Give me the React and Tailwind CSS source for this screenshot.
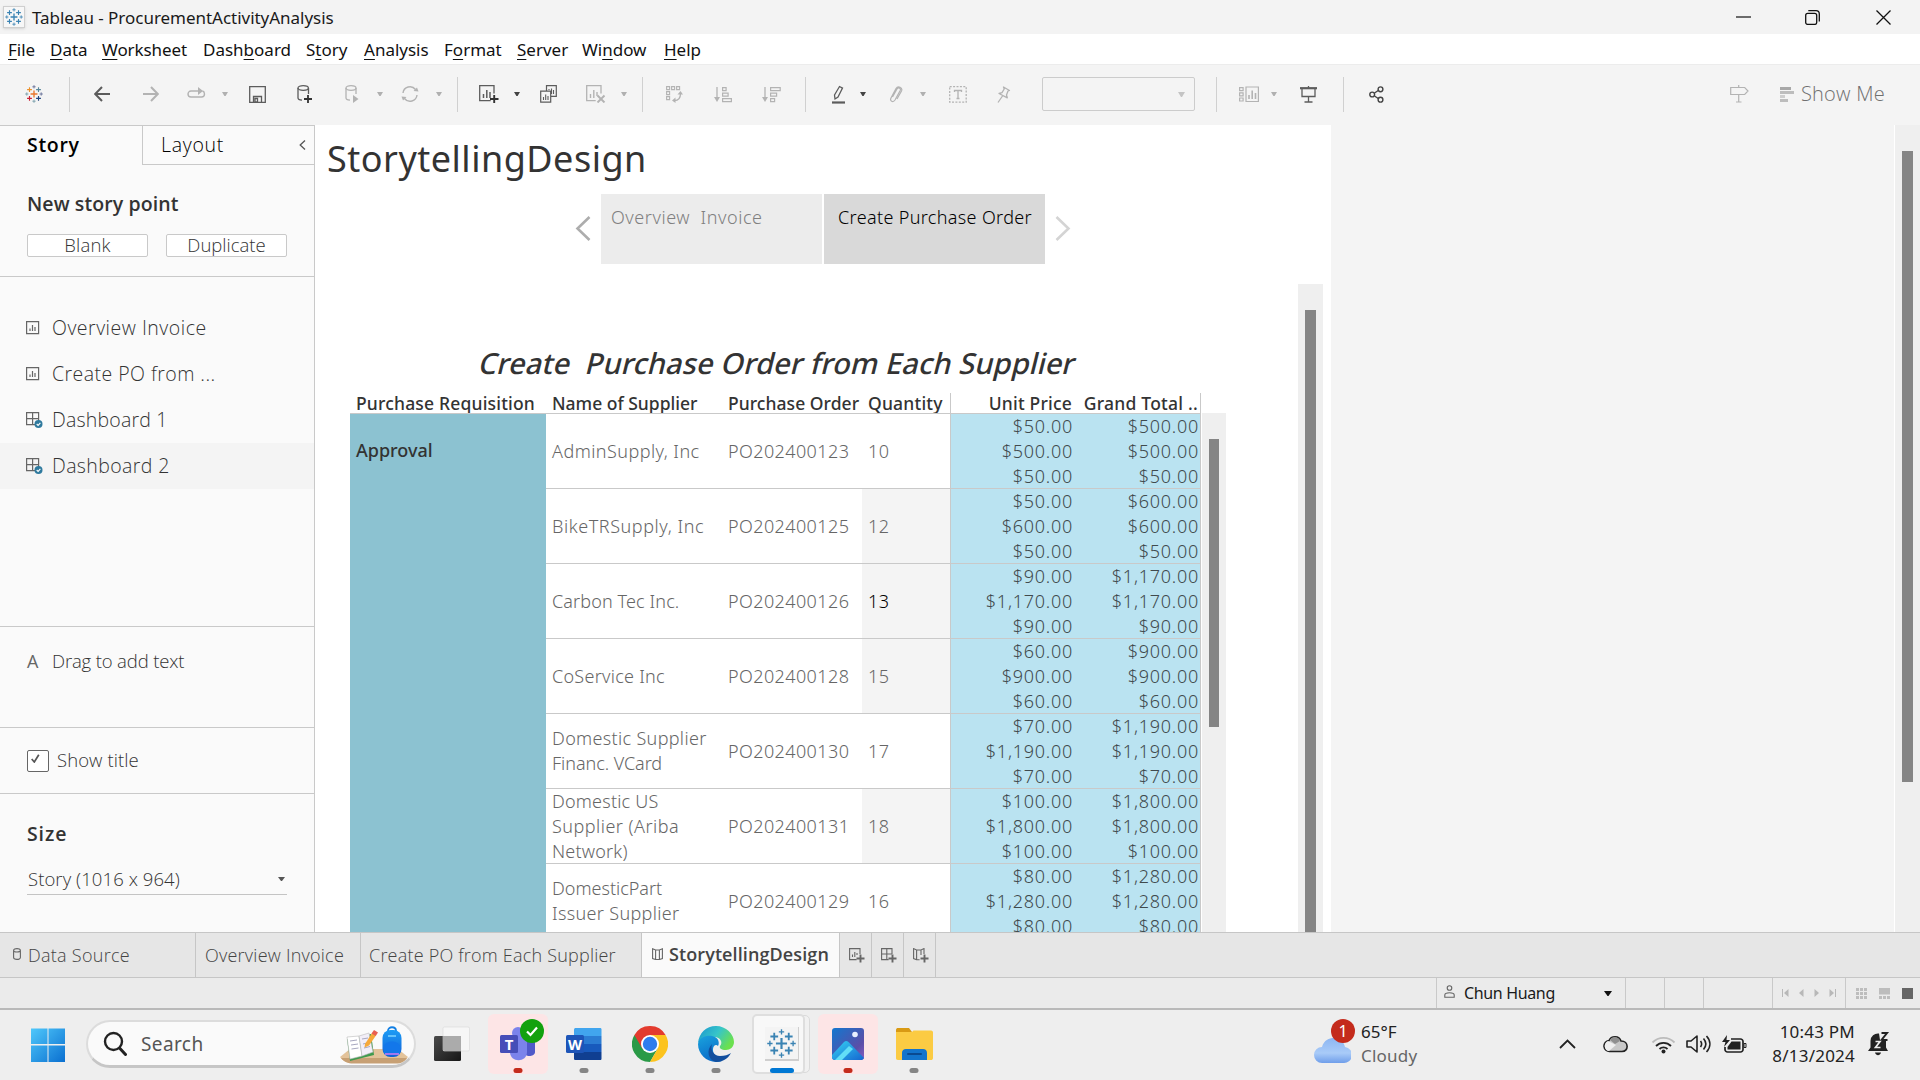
import React from "react";

const SEGOE = "font-['Noto_Sans','Open_Sans',sans-serif]";
const BENTON = "font-['Open_Sans','Noto_Sans',sans-serif]";
const VIEW = "font-['Noto_Sans','Open_Sans',sans-serif]";

function T({ className = "", children }) {
  return <span className={"inline-block whitespace-pre " + className}>{children}</span>;
}

function I({ w, h, className = "", children, vb }) {
  return (
    <svg width={w} height={h} viewBox={vb || `0 0 ${w} ${h}`} fill="none" className={"shrink-0 " + className}>
      {children}
    </svg>
  );
}

const MARKS = [
  [12, 12, 4.6, 1.8], [6, 6.2, 3.2, 1.5], [18, 6.2, 3.2, 1.5], [6, 17.8, 3.2, 1.5], [18, 17.8, 3.2, 1.5],
  [12, 2.4, 2.2, 1.1], [12, 21.6, 2.2, 1.1], [2.4, 12, 2.2, 1.1], [21.6, 12, 2.2, 1.1],
];
const LOGO_COLORS = ["#e8762c", "#eb912c", "#59879b", "#c72035", "#1f447e", "#5c6692", "#7199a6", "#7199a6", "#5c6692"];

function TableauMark({ size, multi, className = "" }) {
  return (
    <I w={size} h={size} vb="0 0 24 24" className={className}>
      {MARKS.map(([x, y, a, s], i) => (
        <path key={i} d={`M${x - a} ${y}h${2 * a}M${x} ${y - a}v${2 * a}`} stroke={multi ? LOGO_COLORS[i] : "#3a83b3"} strokeWidth={s} />
      ))}
    </I>
  );
}

function Caret({ className = "", color = "#b0b0b0" }) {
  return <I w={6} h={4} className={className}><path d="M0 0h6L3.6 4h-1.2z" fill={color} /></I>;
}
function Sep({ className = "" }) {
  return <div className={"h-[35px] w-px shrink-0 bg-[#d0d0d0] " + className} />;
}

const MENU = [
  ["", "F", "ile", "w-[42px]"], ["", "D", "ata", "w-[52px]"], ["", "W", "orksheet", "w-[101px] tracking-[-0.1px]"],
  ["Dash", "b", "oard", "w-[103px]"], ["S", "t", "ory", "w-[58px]"], ["", "A", "nalysis", "w-[80px]"],
  ["F", "o", "rmat", "w-[73px]"], ["", "S", "erver", "w-[65px]"], ["Wi", "n", "dow", "w-[82px]"], ["", "H", "elp", "w-[40px]"],
];

function TitleBar() {
  return (
    <div className={"flex h-[34px] items-center bg-[#f3f3f3] " + SEGOE}>
      <div className="ml-[3px] flex h-[22px] w-[22px] items-center justify-center border border-[#cfcfcf] bg-[#f7f7f7] shadow-sm">
        <TableauMark size={18} />
      </div>
      <T className="ml-[7px] text-[17px] leading-none text-[#1a1a1a] tracking-[-0.03px]">Tableau - ProcurementActivityAnalysis</T>
      <I w={15} h={2} className="ml-auto mr-[54px]"><path d="M0 1h15" stroke="#111" strokeWidth="1.2" /></I>
      <I w={15} h={15} className="mr-[56px]">
        <rect x=".7" y="3.4" width="11" height="11" rx="2" stroke="#111" strokeWidth="1.3" />
        <path d="M3.3.7h7.7a3.3 3.3 0 0 1 3.3 3.3v7.6" stroke="#111" strokeWidth="1.3" />
      </I>
      <I w={15} h={15} className="mr-[29px]"><path d="M.5.5l14 14M14.500.5l-14 14" stroke="#111" strokeWidth="1.3" /></I>
    </div>
  );
}

function MenuBar() {
  return (
    <div className={"flex h-[30px] items-center bg-white pl-[8px] pt-px text-[17px] leading-none text-[#111] " + SEGOE}>
      {MENU.map(([a, u, b, c]) => (
        <T key={a + u + b} className={c}>{a}<span className="underline decoration-1 underline-offset-[3px]">{u}</span>{b}</T>
      ))}
    </div>
  );
}

const G = "#b3b3b3";
const D = "#5c5c5c";

function Toolbar() {
  return (
    <div className="flex h-[61px] items-center border-t border-[#ececec] bg-[#f4f4f4] pb-[2px]">
      <TableauMark size={18} multi className="ml-[25px]" />
      <Sep className="ml-[26px]" />
      <I w={17} h={16} className="ml-[24px]"><path d="M16 8H1.5M8 1L1.2 8 8 15" stroke={D} strokeWidth="2" /></I>
      <I w={17} h={16} className="ml-[31px]"><path d="M1 8h14.5M9 1l6.8 7L9 15" stroke={G} strokeWidth="2" /></I>
      <I w={19} h={14} className="ml-[28px]"><path d="M12 4H4a3 3 0 0 0-3 3v0a3 3 0 0 0 3 3h10.500a3 3 0 0 0 3-3c0-1.500-.5-2.500-2-3" stroke={G} strokeWidth="1.4" /><path d="M11 0l5 4-5 4z" fill={G} /></I>
      <Caret className="ml-[16px]" />
      <I w={17} h={17} className="ml-[21px]"><path d="M.7.700h15.600v15.600H.7zM4.500 16v-5.500h8V16M6 12.500v3.500h2.500v-3.500z" stroke={D} strokeWidth="1.300" /></I>
      <I w={16} h={18} className="ml-[31px]">
        <path d="M1 3v10c0 1.500 1.500 2 4 2.200M11.500 3v6" stroke={D} strokeWidth="1.3" /><ellipse cx="6.200" cy="3" rx="5.200" ry="2.300" stroke={D} strokeWidth="1.3" /><path d="M7 14h8M11 10v8" stroke="#333" strokeWidth="1.8" />
      </I>
      <I w={14} h={18} className="ml-[32px]">
        <path d="M1 3v10c0 1.500 1.500 2 4 2.200M11 3v6" stroke={G} strokeWidth="1.3" /><ellipse cx="6" cy="3" rx="5" ry="2.300" stroke={G} strokeWidth="1.3" /><path d="M8 10l5.500 4L8 18z" fill={G} />
      </I>
      <Caret className="ml-[18px]" />
      <I w={18} h={18} className="ml-[18px]">
        <path d="M2 8a7 7 0 0 1 12.500-3.500M16 10a7 7 0 0 1-12.500 3.500" stroke={G} strokeWidth="1.4" /><path d="M17.500 6.500l-5-.5L16 2.500zM.5 11.500l5 .5L2 15.500z" fill={G} />
      </I>
      <Caret className="ml-[17px]" />
      <Sep className="ml-[15px]" />
      <I w={20} h={18} className="ml-[21px]">
        <path d="M15 8.500V.700H.700v15h11" stroke={D} strokeWidth="1.300" /><path d="M4.500 13V9M7.800 13V5M11 13V7" stroke={D} strokeWidth="1.500" /><path d="M11 14h8.500M15.200 10v8" stroke="#333" strokeWidth="1.900" />
      </I>
      <Caret className="ml-[15px]" color="#444" />
      <I w={17} h={18} className="ml-[20px]">
        <path d="M6.500 6V.700h9.800v10.600h-5.500M.7 6.200h10v11h-10z" stroke={D} strokeWidth="1.200" /><path d="M9 4v1M11.500 9V3.500M13.500 9V5M3.500 15v-3M5.700 15V9.500M8 15v-4" stroke={D} strokeWidth="1.100" />
      </I>
      <I w={20} h={18} className="ml-[29px]">
        <path d="M15 8.500V.700H.700v15h9" stroke={G} strokeWidth="1.300" /><path d="M4.500 13V9M7.800 13V5M11 11V7" stroke={G} strokeWidth="1.400" /><path d="M11.500 10.500l7 7M18.500 10.500l-7 7" stroke={G} strokeWidth="1.900" />
      </I>
      <Caret className="ml-[15px]" />
      <Sep className="ml-[15px]" />
      <I w={17} h={18} className="ml-[23px]">
        <path d="M.6 1.600h3v3h-3zM5.600 1.600h3v3h-3zM10.600 1.600h3v3h-3zM.6 6.600h3v3h-3zM.6 11.600h3v3h-3z" stroke={G} strokeWidth="1.100" /><path d="M14.500 8.500c0 4-2 7-6 7" stroke={G} strokeWidth="1.300" /><path d="M11.500 9.500l3-3.500 2.500 3.500zM9.500 12.500L6 15.500l3.500 2.500z" fill={G} />
      </I>
      <I w={18} h={17} className="ml-[31px]">
        <path d="M3 1v12" stroke={G} strokeWidth="1.300" /><path d="M0 11h6l-3 5z" fill={G} /><path d="M8.600 1.600h3.500v3H8.600zM8.600 7.100h5.500v3H8.600zM8.600 12.600h8.800v3H8.600z" stroke={G} strokeWidth="1.200" />
      </I>
      <I w={19} h={17} className="ml-[30px]">
        <path d="M3 1v12" stroke={G} strokeWidth="1.300" /><path d="M0 11h6l-3 5z" fill={G} /><path d="M8.600 1.600h9.600v3H8.600zM8.600 7.100h6v3H8.600zM8.600 12.600h4v3H8.600z" stroke={G} strokeWidth="1.200" />
      </I>
      <Sep className="ml-[24px]" />
      <I w={13} h={19} className="ml-[26px]">
        <path d="M2.500 10L7.500 1.500l3 1.600L6 12l-3 2z" stroke={D} strokeWidth="1.300" /><path d="M0 17.500h13" stroke={D} strokeWidth="2.200" />
      </I>
      <Caret className="ml-[15px]" color="#444" />
      <I w={14} h={17} className="ml-[23px]"><path d="M3.500 11L8 3c1.500-2 4.200-.6 3.200 1.500L6 14c-2 3-5.500 1-4-2L7 2.500C9-.500 14 1.500 12.500 5L8 13" stroke={G} strokeWidth="1.200" /></I>
      <Caret className="ml-[17px]" />
      <I w={18} h={17} className="ml-[23px]"><rect x=".7" y=".7" width="16.500" height="15.500" stroke={G} strokeWidth="1.300" strokeDasharray="2 1.400" /><path d="M5.500 6V4.500h7V6M9 4.500v8M7.500 12.500h3" stroke={G} strokeWidth="1.300" /></I>
      <I w={14} h={17} className="ml-[30px]"><path d="M6.500 1l6 3.500-1.500.5-1.500 4 .8 2.800L2 7.500l3-.8L7.200 3zM5.500 10L1 16.500" stroke={G} strokeWidth="1.300" strokeLinejoin="round" /></I>
      <div className="ml-[31px] flex h-[34px] w-[153px] items-center justify-end rounded-[2px] border border-[#cccccc]">
        <I w={7} h={5} className="mr-[9px]"><path d="M0 0h7L4 5H3z" fill="#c4c4c4" /></I>
      </div>
      <Sep className="ml-[21px]" />
      <I w={20} h={17} className="ml-[22px]"><path d="M.6 1.600h3.500v3H.6zM.6 6.800h3.500v3H.6zM.6 12h3.500v3H.6zM7 1h12.400v14.500H7z" stroke={G} strokeWidth="1.200" /><path d="M10 13V9M13.200 13V4.500M16.500 13V7" stroke={G} strokeWidth="1.600" /></I>
      <Caret className="ml-[12px]" />
      <I w={19} h={17} className="ml-[22px]"><path d="M1 2.200h17" stroke={D} strokeWidth="2.200" /><path d="M3 3v7.500h13V3M9.500 11v5M5.500 16h8M9.500 0v2" stroke={D} strokeWidth="1.300" /></I>
      <Sep className="ml-[25px]" />
      <I w={15} h={17} className="ml-[25px]"><path d="M5.500 7L10 4M5.500 10L10 13" stroke="#444" strokeWidth="1.400" /><circle cx="3.200" cy="8.500" r="2.400" stroke="#444" strokeWidth="1.400" /><circle cx="11.500" cy="3.300" r="2.400" stroke="#444" strokeWidth="1.400" /><circle cx="11.500" cy="13.700" r="2.400" stroke="#444" strokeWidth="1.400" /></I>
      <I w={19} h={18} className="ml-auto"><path d="M.7 2.500h14l3.300 3.500-3.300 3.500H.7zM8.700 0v2.500M8.700 9.500V17M6 17h5.500" stroke={G} strokeWidth="1.200" /></I>
      <I w={14} h={15} className="ml-[31px]"><path d="M0 1.500h11" stroke="#a8a8a8" strokeWidth="3" /><path d="M0 5.500h14M0 13.500h8" stroke="#bdbdbd" strokeWidth="3" /><path d="M0 9.500h5" stroke="#cecece" strokeWidth="3" /></I>
      <T className={"ml-[7px] mr-[35px] text-[20px] font-light leading-none tracking-[0.25px] text-[#707070] " + BENTON}>Show Me</T>
    </div>
  );
}

function SheetIcon() {
  return <I w={17} h={16}><path d="M.6 1.600h12v12H.6zM4 11V8.500M6.500 11V5M9 11V7" stroke="#666" strokeWidth="1.200" /></I>;
}
function DashIcon() {
  return (
    <I w={17} h={16}><path d="M.6.600h12v12H.6zM6.600 0v13M0 6.600h13" stroke="#666" strokeWidth="1.200" /><circle cx="12.500" cy="12" r="4" fill="#2f7a9e" /><path d="M10.700 12l1.400 1.400 2.300-2.600" stroke="#fff" strokeWidth="1.100" /></I>
  );
}

const SHEETS = [
  ["Overview Invoice", "tracking-[0.5px]", 0], ["Create PO from ...", "tracking-[0.45px]", 0],
  ["Dashboard 1", "tracking-[0.2px]", 1], ["Dashboard 2", "tracking-[0.38px]", 1],
];

function Sidebar() {
  return (
    <div className={"flex w-[315px] shrink-0 flex-col border-r border-t border-[#c9c9c9] bg-[#fafafa] text-[#333] " + BENTON}>
      <div className="flex h-[39px] shrink-0">
        <div className="flex w-[142px] items-center pb-[2px] pl-[27px]"><T className="text-[19.500px] font-semibold leading-none tracking-[0.7px] text-black">Story</T></div>
        <div className="flex grow items-center border-b border-l border-[#c9c9c9] pl-[18px]">
          <T className="text-[19.500px] font-light leading-none tracking-[0.7px] text-black">Layout</T>
          <I w={7} h={10} className="ml-auto mr-[8px]"><path d="M6 .500L1.200 5 6 9.500" stroke="#555" strokeWidth="1.300" /></I>
        </div>
      </div>
      <div className="h-[112px] shrink-0 border-b border-[#c9c9c9] pl-[27px]">
        <div className="flex h-[78px] items-center"><T className="text-[19.500px] font-semibold leading-none tracking-[0.1px]">New story point</T></div>
        <div className="-mt-[9px] flex gap-[18px] text-[18.500px] font-light leading-none">
          <div className="flex h-[23px] w-[121px] items-center justify-center rounded-[2px] border border-[#c9c9c9] bg-white"><T className="tracking-[0.2px]">Blank</T></div>
          <div className="flex h-[23px] w-[121px] items-center justify-center rounded-[2px] border border-[#c9c9c9] bg-white"><T>Duplicate</T></div>
        </div>
      </div>
      <div className="h-[350px] shrink-0 border-b border-[#c9c9c9] pt-[28px]">
        {SHEETS.map(([t, c, d], i) => (
          <div key={t} className={"flex h-[46px] items-center pl-[26px] " + (i === 3 ? "bg-[#f4f4f4]" : "")}>
            {d ? <DashIcon /> : <SheetIcon />}
            <T className={"ml-[9px] text-[19.500px] font-light leading-none " + c}>{t}</T>
          </div>
        ))}
      </div>
      <div className="flex h-[101px] shrink-0 border-b border-[#c9c9c9] pl-[27px] pt-[22px]">
        <div className="flex h-[24px] items-center"><span className="w-[25px] text-[18px] leading-none text-[#666]">A</span><T className="text-[18.500px] font-light leading-none tracking-[-0.15px]">Drag to add text</T></div>
      </div>
      <div className="flex h-[66px] shrink-0 items-center border-b border-[#c9c9c9] pl-[27px]">
        <div className="flex h-[22px] w-[22px] rounded-[2px] border border-[#666] bg-white"><I w={9} h={9} className="ml-[3px] mt-[3px]"><path d="M.7 5l2.600 3L7.800.700" stroke="#555" strokeWidth="1.700" /></I></div>
        <T className="ml-[8px] text-[18.500px] font-light leading-none tracking-[0.07px]">Show title</T>
      </div>
      <div className="pl-[27px] pt-[27px]">
        <div className="flex h-[26px] items-center"><T className="text-[19.500px] font-semibold leading-none tracking-[0.9px]">Size</T></div>
        <div className="mt-[15px] flex h-[33px] w-[260px] items-center border-b border-[#c4c4c4] pl-px pt-[2px]">
          <T className="text-[18.500px] font-light leading-none tracking-[0.08px]">Story (1016 x 964)</T>
          <I w={7} h={4} className="ml-auto mr-[2px]"><path d="M0 0h7L4 4H3z" fill="#555" /></I>
        </div>
      </div>
    </div>
  );
}

const ROWS = [
  [[["AdminSupply, Inc", "tracking-[0.45px]"]], "123", "10", 0, "50", "500", "500", "50"],
  [[["BikeTRSupply, Inc", "tracking-[0.57px]"]], "125", "12", 1, "50", "600", "600", "50"],
  [[["Carbon Tec Inc.", "tracking-[0.12px]"]], "126", "13", 1, "90", "1,170", "1,170", "90"],
  [[["CoService Inc", "tracking-[0.27px]"]], "128", "15", 1, "60", "900", "900", "60"],
  [[["Domestic Supplier", "tracking-[0.33px]"], ["Financ. VCard", "tracking-[-0.05px]"]], "130", "17", 0, "70", "1,190", "1,190", "70"],
  [[["Domestic US", "tracking-[0.2px]"], ["Supplier (Ariba", "tracking-[0.48px]"], ["Network)", "tracking-[0.2px]"]], "131", "18", 1, "100", "1,800", "1,800", "100"],
  [[["DomesticPart", ""], ["Issuer Supplier", "tracking-[0.33px]"]], "129", "16", 0, "80", "1,280", "1,280", "80"],
];

function Price({ v }) {
  return <T className="h-[25px] shrink-0 leading-[25px] tracking-[0.75px]">{"$" + v + ".00"}</T>;
}

function Dashboard() {
  return (
    <div className={"flex w-[983px] shrink-0 flex-col pl-[35px] " + VIEW}>
      <div className="mt-[58px] flex h-[40px] shrink-0 items-center pl-[130px]">
        <T className="-skew-x-[14deg] text-[29px] font-medium leading-none tracking-[0.1px] text-[#333]">Create  Purchase Order from Each Supplier</T>
      </div>
      <div className="mt-[11px] flex h-[20px] shrink-0 items-center text-[17.500px] font-medium leading-none text-[#333]">
        <div className="w-[202px] pl-[6px] pt-[2px]"><T className="tracking-[0.18px]">Purchase Requisition</T></div>
        <div className="w-[176px] pt-[2px]"><T>Name of Supplier</T></div>
        <div className="w-[140px] pt-[2px]"><T className="tracking-[0.05px]">Purchase Order</T></div>
        <div className="w-[82px] pt-[2px]"><T className="tracking-[0.2px]">Quantity</T></div>
        <div className="flex h-full w-[123px] items-center justify-end border-l border-[#c9c9c9] pr-px pt-[2px]"><T className="tracking-[0.2px]">Unit Price</T></div>
        <div className="flex h-full w-[128px] items-center justify-end border-r border-[#c9c9c9] pr-[2px] pt-[2px]"><T className="tracking-[0.23px]">Grand Total ..</T></div>
      </div>
      <div className="flex grow">
        <div className="w-[196px] shrink-0 border-t border-[#c9c9c9] bg-[#8cc2d1] pl-[6px] pt-[24px]">
          <div className="flex h-[24px] items-center"><T className="text-[18px] font-medium leading-none text-[#333]">Approval</T></div>
        </div>
        <div className="w-[655px] shrink-0 border-r border-[#c9c9c9]">
          {ROWS.map(([name, po, qty, shade, a, b, c, d]) => (
            <div key={po} className="flex h-[75px] border-t border-[#c9c9c9] text-[18px] font-light text-[#666]">
              <div className="flex w-[176px] flex-col justify-center pl-[6px] leading-[25px]">
                {name.map(([n, cls]) => <T key={n} className={"shrink-0 " + cls}>{n}</T>)}
              </div>
              <div className="flex w-[140px] items-center pl-[6px]"><T className="tracking-[0.4px]">{"PO202400" + po}</T></div>
              <div className={"flex w-[88px] items-center pl-[6px] " + (shade ? "bg-[#f4f4f4] " : "") + (qty === "13" ? "text-black" : "")}><T className="tracking-[0.4px]">{qty}</T></div>
              <div className="flex w-[123px] flex-col items-end border-l border-[#c9c9c9] bg-[#bae3f1] text-[#404a4d]">
                <Price v={a} /><Price v={b} /><Price v={d} />
              </div>
              <div className="flex grow flex-col items-end bg-[#bae3f1] pr-px text-[#404a4d]">
                <Price v={c} /><Price v={b} /><Price v={d} />
              </div>
            </div>
          ))}
        </div>
        <div className="ml-px w-[24px] shrink-0 bg-[#efefef] pt-[26px]"><div className="ml-[7px] h-[288px] w-[10px] bg-[#858585]" /></div>
      </div>
    </div>
  );
}

function Story() {
  return (
    <div className={"flex h-full w-[1016px] shrink-0 flex-col overflow-hidden bg-white " + VIEW}>
      <div className="flex h-[69px] shrink-0 items-center pb-px pl-[12px]"><T className="text-[36px] leading-none tracking-[0.5px] text-[#333]">StorytellingDesign</T></div>
      <div className="flex h-[70px] shrink-0 items-center pl-[260px] text-[18px] font-light leading-none">
        <I w={16} h={25} className="-mt-[2px]"><path d="M14.500 1L2.500 12.500l12 11.500" stroke="#adadad" strokeWidth="2.600" /></I>
        <div className="ml-[10px] h-full w-[221px] bg-[#ececec] pl-[10px] pt-[14px]"><T className="tracking-[0.55px] text-[#808080]">Overview  Invoice</T></div>
        <div className="ml-[2px] h-full w-[221px] bg-[#d9d9d9] pl-[14px] pt-[14px]"><T className="tracking-[0.35px] text-black">Create Purchase Order</T></div>
        <I w={16} h={25} className="-mt-[2px] ml-[10px]"><path d="M1.500 1l12 11.500-12 11.500" stroke="#d4d4d4" strokeWidth="2.600" /></I>
      </div>
      <div className="mt-[20px] flex min-h-0 grow">
        <Dashboard />
        <div className="w-[25px] shrink-0 bg-[#efefef] pt-[26px]"><div className="ml-[7px] h-full w-[11px] bg-[#858585]" /></div>
      </div>
    </div>
  );
}

const P = "#666";
function SheetTabs() {
  return (
    <div className={"flex h-[46px] border-b border-t border-[#c6c6c6] bg-[#e6e6e6] text-[18px] font-light leading-none text-[#444] " + BENTON}>
      <div className="flex w-[196px] items-center border-r border-[#c6c6c6] pl-[13px]">
        <I w={8} h={12} className="-mt-[2px]"><path d="M.6 2.500v7c0 2.500 6.800 2.500 6.800 0v-7c0-2.500-6.800-2.500-6.800 0c0 2 6.800 2 6.800 0" stroke={P} strokeWidth="1.100" /></I>
        <T className="ml-[7px] tracking-[0.27px]">Data Source</T>
      </div>
      <div className="flex w-[165px] items-center border-r border-[#c6c6c6] pl-[9px]"><T className="tracking-[0.23px]">Overview Invoice</T></div>
      <div className="flex w-[281px] items-center border-r border-[#c6c6c6] pl-[8px]"><T className="tracking-[0.21px]">Create PO from Each Supplier</T></div>
      <div className="flex w-[198px] items-center border-r border-[#c6c6c6] bg-[#fafafa] pb-[2px] pl-[10px]">
        <I w={11} h={12}><path d="M.6.800L3.600 2h3.800l3-1.200v9.700L7.400 11.500H3.600L.6 10.500zM3.600 2v9.500M7.400 2v9.500" stroke={P} strokeWidth="1.100" /></I>
        <T className="ml-[6px] font-semibold tracking-[0.1px]">StorytellingDesign</T>
      </div>
      <div className="flex w-[32px] items-center border-r border-[#c6c6c6] pl-[9px]"><I w={16} h={15}><path d="M11 6V.600H.6v11h7M3.500 9V6.500M5.800 9V4M8 7V5" stroke={P} strokeWidth="1.100" /><path d="M7.500 10.500h8M11.500 6.500v8" stroke={P} strokeWidth="1.900" /></I></div>
      <div className="flex w-[32px] items-center border-r border-[#c6c6c6] pl-[9px]"><I w={16} h={15}><path d="M11 6V.600H.6v11h7M5.800 0v11M0 6h11" stroke={P} strokeWidth="1.100" /><path d="M7.500 10.500h8M11.500 6.500v8" stroke={P} strokeWidth="1.900" /></I></div>
      <div className="flex w-[32px] items-center border-r border-[#c6c6c6] pl-[9px]"><I w={16} h={15}><path d="M11 6V.600L8 2H3.500L.6.600v10l3 1.200h3M3.600 2v9.500M8 2v5" stroke={P} strokeWidth="1.100" /><path d="M7.500 10.500h8M11.500 6.500v8" stroke={P} strokeWidth="1.900" /></I></div>
    </div>
  );
}

const CELL = "h-full shrink-0 border-l border-[#c9c9c9] ";
function StatusBar() {
  return (
    <div className={"flex h-[32px] items-center justify-end border-b-2 border-[#b9b9b9] bg-[#ebebeb] " + SEGOE}>
      <div className={CELL + "flex w-[189px] items-center pl-[7px]"}>
        <I w={11} h={13} className="-mt-[3px]"><circle cx="5.500" cy="3" r="2.300" stroke={P} strokeWidth="1.100" /><path d="M.8 12.300V10c0-3 9.400-3 9.400 0v2.300z" stroke={P} strokeWidth="1.100" /></I>
        <T className="ml-[9px] text-[16px] leading-none tracking-[-0.35px] text-[#1a1a1a]">Chun Huang</T>
        <I w={8} h={5} className="ml-auto mr-[13px]"><path d="M0 0h8L4.500 5h-1z" fill="#111" /></I>
      </div>
      <div className={CELL + "w-[39px]"} />
      <div className={CELL + "w-[39px]"} />
      <div className={CELL + "w-[69px]"} />
      <div className={CELL + "flex w-[73px] items-center gap-[10px] pl-[9px]"}>
        <I w={7} h={8}><path d="M.5 0v8" stroke="#b8b8b8" /><path d="M6.500 0v8L2 4z" fill="#b8b8b8" /></I>
        <I w={5} h={8}><path d="M4.500 0v8L0 4z" fill="#b8b8b8" /></I>
        <I w={5} h={8}><path d="M.5 0v8L5 4z" fill="#b8b8b8" /></I>
        <I w={7} h={8}><path d="M6.500 0v8" stroke="#b8b8b8" /><path d="M.5 0v8L5 4z" fill="#b8b8b8" /></I>
      </div>
      <div className={CELL + "flex w-[75px] items-center gap-[12px] pl-[10px]"}>
        <I w={11} h={11}><path d="M0 1.500h11M0 5.500h11M0 9.500h11" stroke="#bdbdbd" strokeWidth="3" strokeDasharray="3 1" /></I>
        <I w={11} h={11}><path d="M0 0h11v6.500H0z" fill="#bdbdbd" /><path d="M0 9.500h11" stroke="#bdbdbd" strokeWidth="3" strokeDasharray="3 1" /></I>
        <div className="h-[11px] w-[11px] bg-[#666]" />
      </div>
    </div>
  );
}

function TaskApp({ tile = "", dot = "bg-[#858585] w-[9px]", children }) {
  return (
    <div className={"relative flex h-[60px] w-[60px] shrink-0 items-center justify-center rounded-[6px] " + tile}>
      {children}
      <div className={"absolute bottom-[1px] left-1/2 h-[5px] -translate-x-1/2 rounded-full " + dot} />
    </div>
  );
}

function Taskbar() {
  return (
    <div className={"flex h-[70px] items-center bg-[#eeeeee] pb-[2px] " + SEGOE}>
      <I w={36} h={36} className="ml-[30px] mt-[1px]">
        <defs><linearGradient id="win" x1="0" y1="0" x2="1" y2="1"><stop stopColor="#4fc8fb" /><stop offset="1" stopColor="#0a6fd0" /></linearGradient></defs>
        <path d="M1 1.500h16.500V17H1zM18.500 1.500H35V17H18.500zM1 18.500h16.500V35H1zM18.500 18.500H35V35H18.500z" fill="url(#win)" />
      </I>
      <div className="ml-[20px] flex h-[48px] w-[330px] items-center rounded-full border-2 border-b-[3px] border-[#dcdcdc] border-b-[#c6c6c6] bg-[#fafafa]">
        <I w={24} h={25} className="ml-[15px]"><circle cx="10.500" cy="10.500" r="8.500" stroke="#222" strokeWidth="2.400" /><path d="M16.500 17l6 6.500" stroke="#222" strokeWidth="3" strokeLinecap="round" /></I>
        <T className="ml-[14px] mt-[2px] text-[19px] leading-none tracking-[0.4px] text-[#555]">Search</T>
        <I w={68} h={38} className="ml-auto mr-[6px] mt-[2px]">
          <defs><linearGradient id="bag" x1="0" y1="0" x2="0" y2="1"><stop stopColor="#1c9cf5" /><stop offset="1" stopColor="#1461d8" /></linearGradient></defs>
          <path d="M0 31l10-8h48l10 8c-3 4-7 6-12 6H13C7 37 3 35 0 31z" fill="#e3c39a" /><path d="M1 32c3 4 7 5.500 12 5.500h43c5 0 9-2 11-5.500z" fill="#c7a074" />
          <path d="M7 13l24-5 3 21-24 6z" fill="#3f9a4e" /><path d="M7 11l12-1 3 20-12 3z" fill="#fff" stroke="#bbb" strokeWidth=".6" /><path d="M19 10l10-3 4 19-11 4z" fill="#f2eef8" stroke="#bbb" strokeWidth=".6" />
          <path d="M10 15l7-1M11 19l7-1M11.500 23l7-1M22 13l6-1M23 18l6-1.500M24 22l6-1.500" stroke="#a8a8c0" />
          <path d="M25 18l7-11 4 2.500-7 10-4.500 2z" fill="#f6a93b" /><path d="M31.500 7.500L34 4l4 2.500-2.300 3.500z" fill="#e85f52" />
          <path d="M48 5c0-5 8-5 8 0" stroke="#1380e4" strokeWidth="1.800" /><rect x="42.500" y="4" width="19" height="27" rx="8" fill="url(#bag)" /><path d="M44 20c2-6 14-6 16 0v8H44z" fill="#1377ea" /><path d="M45 28h14" stroke="#b37af0" strokeWidth="1.800" /><path d="M48 10h8" stroke="#7ed4ff" strokeWidth="1.500" />
        </I>
      </div>
      <I w={36} h={36} className="ml-[18px]">
        <defs><linearGradient id="tv" x1="0" y1="0" x2="1" y2="1"><stop stopColor="#4a4a4a" /><stop offset="1" stopColor="#161616" /></linearGradient></defs>
        <rect x="0" y="10" width="27" height="25" rx="1.500" fill="url(#tv)" /><rect x="9" y="1" width="26.500" height="24" rx="1.500" fill="#f6f6f6" fillOpacity=".96" stroke="#d8d8d8" strokeWidth=".6" /><path d="M9 10h18v15H10.500L9 23.500z" fill="#ababab" />
      </I>
      <div className="ml-[18px] flex gap-[6px]">
        <TaskApp tile="bg-[#fde5e6]" dot="bg-[#c42b1c] w-[9px]">
          <I w={37} h={36} className="-ml-[1px]">
            <circle cx="29" cy="9" r="4.500" fill="#5059c9" /><path d="M24 13h12v13c0 4-7 5-9 3z" fill="#5059c9" /><circle cx="19" cy="7" r="6" fill="#7b83eb" /><path d="M11 12h17v14c0 11-17 11-17 0z" fill="#7b83eb" /><rect x="1" y="9" width="18" height="18" rx="1.500" fill="#464eb8" />
            <text x="10" y="23.500" textAnchor="middle" fontFamily="Noto Sans" fontWeight="700" fontSize="15" fill="#fff">T</text>
          </I>
          <I w={24} h={24} className="absolute right-[4px] top-[5px]"><circle cx="12" cy="12" r="12" fill="#13a10e" /><path d="M7 12.500l3.500 3.500 6.500-7.500" stroke="#fff" strokeWidth="2.200" /></I>
        </TaskApp>
        <TaskApp>
          <I w={36} h={34}>
            <path d="M8 2.500C8 1.500 9 1 9.500 1H34c1 0 1.500.500 1.500 1.500V9H8z" fill="#41a5ee" /><path d="M8 9h27.500v8H8z" fill="#2b7cd3" /><path d="M8 17h27.500v8H8z" fill="#185abd" /><path d="M8 25h27.500v6.500c0 1-.5 1.500-1.500 1.500H9.500C8.500 33 8 32.500 8 31.500z" fill="#103f91" /><rect x="0" y="8" width="18" height="18" rx="1.500" fill="#1d55b8" />
            <text x="9" y="22.500" textAnchor="middle" fontFamily="Noto Sans" fontWeight="700" fontSize="14.500" fill="#fff">W</text>
          </I>
        </TaskApp>
        <TaskApp>
          <I w={36} h={36} vb="-18 -18 36 36">
            <path d="M-15.590-9A18 18 0 0 0 0 18L7.800 4.500 0 0z" fill="#2a9a47" /><path d="M15.590-9A18 18 0 0 1 0 18L7.800 4.500 0-9z" fill="#fcc31e" /><path d="M-15.590-9L-7.800 4.500 0 0 0-9H15.590A18 18 0 0 0-15.590-9z" fill="#e33b2e" /><circle r="9" fill="#fff" /><circle r="7.200" fill="#2f7ded" />
          </I>
        </TaskApp>
        <TaskApp>
          <I w={36} h={36}>
            <defs>
              <linearGradient id="e1" x1="0" y1="0" x2="1" y2=".5"><stop stopColor="#1793cf" /><stop offset=".55" stopColor="#37c5c9" /><stop offset="1" stopColor="#6be04f" /></linearGradient>
              <linearGradient id="e2" x1="0" y1="0" x2=".4" y2="1"><stop stopColor="#1aa3dd" /><stop offset="1" stopColor="#0a6cc9" /></linearGradient>
            </defs>
            <path d="M0 17C1 7 8 0 18 0s18 8 18 16c0 5-4 8-8 8-5 0-7-2-6-4 3-3 1-9-6-9C8 11 2 14 0 17z" fill="url(#e1)" /><path d="M0 18c1-7 9-9 14-8 6 1 8 6 6 10-3-3-7 2-4 8 3 5 8 7 8 7C12 39 0 30 0 18z" fill="url(#e2)" /><path d="M14 18c-2 6 2 12 8 12 5 0 8-1 11-3-3 6-9 9-15 9-8-2-10-12-4-18z" fill="#124f9e" />
          </I>
        </TaskApp>
        <TaskApp dot="bg-[#0078d4] w-[24px]">
          <div className="absolute left-[4px] top-[1px] h-[58px] w-[54px] rounded-[5px] border border-[#dadada] bg-[#f1f1f1]" />
          <div className="absolute left-0 top-0 h-[60px] w-[53px] rounded-[5px] border-2 border-[#dedede] bg-[#f8f8f8]" />
          <div className="relative flex h-[34px] w-[34px] items-center justify-center border-b-2 border-r border-[#cfcfcf] bg-[#f4f4f4]"><TableauMark size={29} /></div>
        </TaskApp>
        <TaskApp tile="bg-[#fde5e6]" dot="bg-[#c42b1c] w-[9px]">
          <I w={32} h={32}>
            <defs>
              <linearGradient id="p1" x1="0" y1="0" x2="1" y2="1"><stop stopColor="#1277cf" /><stop offset=".7" stopColor="#5a4ea8" /><stop offset="1" stopColor="#8a5cc0" /></linearGradient>
              <linearGradient id="p2" x1="0" y1="0" x2="1" y2="1"><stop stopColor="#35d4f4" /><stop offset="1" stopColor="#1565d0" /></linearGradient>
            </defs>
            <rect width="32" height="32" rx="3" fill="url(#p1)" /><path d="M0 27l12-13c1.500-1.500 3-1.500 4.500 0L32 30c-1 1.500-2 2-3 2H3c-2 0-3-1-3-3z" fill="url(#p2)" /><path d="M3 32l14-14 4 3-11 11z" fill="#62def7" /><circle cx="23" cy="6.500" r="2.800" fill="#e8f0ff" />
          </I>
        </TaskApp>
        <TaskApp>
          <I w={37} h={34}>
            <path d="M0 3c0-1.500 1-2 2-2h11l3 4H0z" fill="#d99a14" /><path d="M0 5h16l1.500-1.500H35c1.500 0 2 1 2 2V31c0 1.500-1 2-2 2H2c-1.500 0-2-1-2-2z" fill="#fbcb43" /><path d="M6 33v-7c0-2.500 1.500-4 4-4h17c2.500 0 4 1.500 4 4v7z" fill="#1274cc" /><path d="M12 27h13" stroke="#0a4a90" strokeWidth="2" strokeLinecap="round" />
          </I>
        </TaskApp>
      </div>
      <div className="relative ml-[370px] h-[50px] w-[45px] shrink-0">
        <I w={37} h={26} className="absolute left-0 top-[19px]">
          <defs><linearGradient id="cl" x1="0" y1="0" x2="0" y2="1"><stop stopColor="#8db6f2" /><stop offset=".6" stopColor="#a9cbf8" /><stop offset="1" stopColor="#6f9eea" /></linearGradient></defs>
          <path d="M8 25a8 8 0 0 1 0-16C10 2 15 0 20 0c6 0 10 4 11 9a8 8 0 0 1-2 16z" fill="url(#cl)" />
        </I>
        <div className="absolute left-[17px] top-0 flex h-[24px] w-[24px] items-center justify-center rounded-full bg-[#c42b1c] text-[16px] leading-none text-white">1</div>
      </div>
      <div className="ml-[2px] flex w-[60px] flex-col text-[17px] leading-[24px]"><T className="text-[#222]">65°F</T><T className="tracking-[0.2px] text-[#666]">Cloudy</T></div>
      <I w={17} h={10} className="ml-auto"><path d="M1 9l7.500-7.500L16 9" stroke="#222" strokeWidth="1.800" /></I>
      <I w={26} h={18} className="ml-[27px]"><path d="M7 16.500a5.500 5.500 0 0 1-1-11C8 1 16 0 18 6c8 0 8 10.500 1 10.500z" fill="#c8c8c8" stroke="#222" strokeWidth="1.600" /><path d="M5 6l8 4-7 6C1 16 0 8 5 6z" fill="#efefef" /><path d="M7 5c2-4 8-4 10 1l-5 3z" fill="#8f8f8f" /></I>
      <I w={25} h={19} className="ml-[22px]"><path d="M1.500 7.500a15.500 15.500 0 0 1 22 0" stroke="#bcbcbc" strokeWidth="1.800" /><path d="M5 11a10.500 10.500 0 0 1 15 0M8.500 14a5.700 5.700 0 0 1 8 0" stroke="#222" strokeWidth="1.800" /><circle cx="12.500" cy="16.500" r="2" fill="#222" /></I>
      <I w={25} h={20} className="ml-[10px]"><path d="M1 7v6h4l6 5V2L5 7z" stroke="#222" strokeWidth="1.600" strokeLinejoin="round" /><path d="M14.500 7c1.500 2 1.500 4 0 6M17.500 4.500c3 3.500 3 7.500 0 11M20.500 2c4.500 5 4.500 11 0 16" stroke="#222" strokeWidth="1.600" /></I>
      <I w={25} h={19} className="ml-[11px]"><path d="M9 4h9.500A2.500 2.500 0 0 1 21 6.500v8a2.500 2.500 0 0 1-2.500 2.500h-13A2.500 2.500 0 0 1 3 14.500V12" stroke="#222" strokeWidth="1.700" /><path d="M22 8.500h2v4h-2z" stroke="#222" /><path d="M9.500 6.500h9v8h-13V12z" fill="#222" /><path d="M5 0L0 7h3.500L2 12l6-7H4.500z" fill="#222" /></I>
      <div className="ml-[20px] flex w-[88px] flex-col items-end text-[17px] leading-[24px] tracking-[0.22px] text-[#222]"><T>10:43 PM</T><T>8/13/2024</T></div>
      <I w={22} h={24} className="ml-[13px] mr-[30px]"><path d="M0 19l2.500-3.500V9A7.500 7.500 0 0 1 11 1.500L12 8h6v7.500L20 19z" fill="#222" /><path d="M7 20.500h6c-1 3.500-5 3.500-6 0z" fill="#222" /><path d="M13.500 1h5.500l-5.500 7H19.500" stroke="#222" strokeWidth="2" /><path d="M7.500 9.500h4.500l-4.500 6h5" stroke="#eee" strokeWidth="1.700" /></I>
    </div>
  );
}

export default function App() {
  return (
    <div className="flex h-[1080px] w-[1920px] flex-col overflow-hidden bg-[#f4f4f4]">
      <TitleBar />
      <MenuBar />
      <Toolbar />
      <div className="flex h-[807px] shrink-0">
        <Sidebar />
        <Story />
        <div className="ml-auto w-[26px] shrink-0 border-l border-white bg-[#efefef] pl-[7px] pt-[26px]"><div className="h-[631px] w-[11px] bg-[#858585]" /></div>
      </div>
      <SheetTabs />
      <StatusBar />
      <Taskbar />
    </div>
  );
}
